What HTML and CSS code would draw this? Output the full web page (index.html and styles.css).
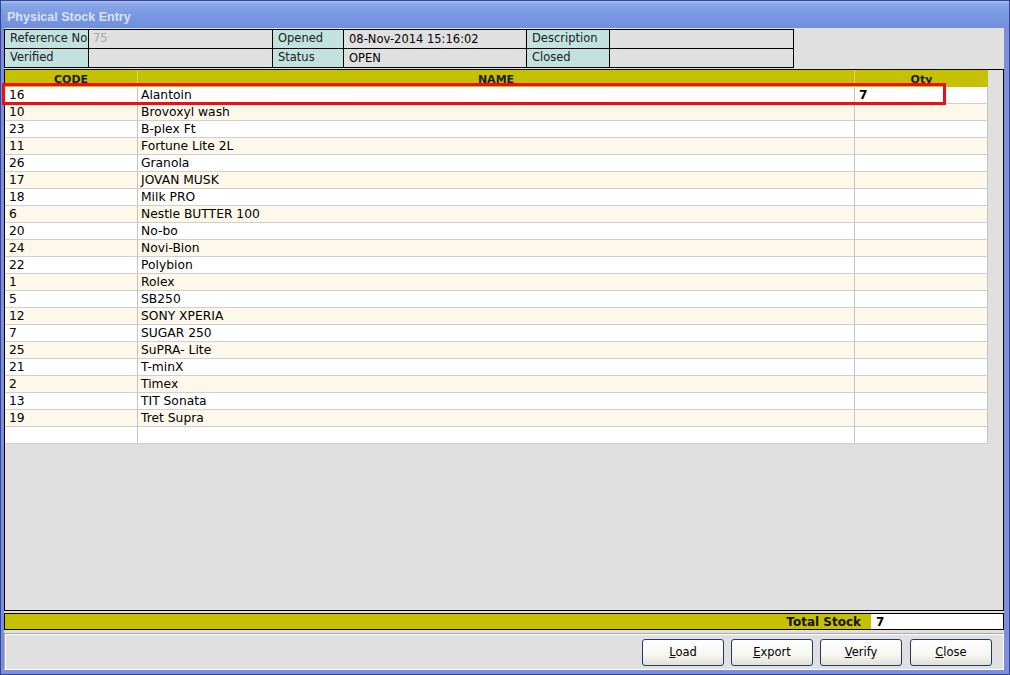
FILE: index.html
```html
<!DOCTYPE html>
<html>
<head>
<meta charset="utf-8">
<title>Physical Stock Entry</title>
<link rel="stylesheet" href="styles.css">
</head>
<body>
<div class="window">
  <div class="titlebar"><span class="title">Physical Stock Entry</span></div>
  <div class="client">
    <div class="info">
      <div class="cell label">Reference No</div>
      <div class="cell value muted">75</div>
      <div class="cell label">Opened</div>
      <div class="cell value wide">08-Nov-2014 15:16:02</div>
      <div class="cell label">Description</div>
      <div class="cell value"></div>
      <div class="cell label">Verified</div>
      <div class="cell value"></div>
      <div class="cell label">Status</div>
      <div class="cell value wide">OPEN</div>
      <div class="cell label">Closed</div>
      <div class="cell value"></div>
    </div>

    <div class="grid">
      <div class="thead">
        <div class="th">CODE</div>
        <div class="th">NAME</div>
        <div class="th last">Qty</div>
      </div>
      <div class="row"><div class="td">16</div><div class="td">Alantoin</div><div class="td qty">7</div></div>
      <div class="row"><div class="td">10</div><div class="td">Brovoxyl wash</div><div class="td qty"></div></div>
      <div class="row"><div class="td">23</div><div class="td">B-plex Ft</div><div class="td qty"></div></div>
      <div class="row"><div class="td">11</div><div class="td">Fortune Lite 2L</div><div class="td qty"></div></div>
      <div class="row"><div class="td">26</div><div class="td">Granola</div><div class="td qty"></div></div>
      <div class="row"><div class="td">17</div><div class="td">JOVAN MUSK</div><div class="td qty"></div></div>
      <div class="row"><div class="td">18</div><div class="td">Milk PRO</div><div class="td qty"></div></div>
      <div class="row"><div class="td">6</div><div class="td">Nestle BUTTER 100</div><div class="td qty"></div></div>
      <div class="row"><div class="td">20</div><div class="td">No-bo</div><div class="td qty"></div></div>
      <div class="row"><div class="td">24</div><div class="td">Novi-Bion</div><div class="td qty"></div></div>
      <div class="row"><div class="td">22</div><div class="td">Polybion</div><div class="td qty"></div></div>
      <div class="row"><div class="td">1</div><div class="td">Rolex</div><div class="td qty"></div></div>
      <div class="row"><div class="td">5</div><div class="td">SB250</div><div class="td qty"></div></div>
      <div class="row"><div class="td">12</div><div class="td">SONY XPERIA</div><div class="td qty"></div></div>
      <div class="row"><div class="td">7</div><div class="td">SUGAR 250</div><div class="td qty"></div></div>
      <div class="row"><div class="td">25</div><div class="td">SuPRA- Lite</div><div class="td qty"></div></div>
      <div class="row"><div class="td">21</div><div class="td">T-minX</div><div class="td qty"></div></div>
      <div class="row"><div class="td">2</div><div class="td">Timex</div><div class="td qty"></div></div>
      <div class="row"><div class="td">13</div><div class="td">TIT Sonata</div><div class="td qty"></div></div>
      <div class="row"><div class="td">19</div><div class="td">Tret Supra</div><div class="td qty"></div></div>
      <div class="row"><div class="td"></div><div class="td"></div><div class="td qty"></div></div>
      <div class="highlight"></div>
    </div>

    <div class="total">
      <span class="total-label">Total Stock</span>
      <span class="total-value">7</span>
    </div>

    <div class="buttons">
      <button class="btn"><u>L</u>oad</button>
      <button class="btn"><u>E</u>xport</button>
      <button class="btn"><u>V</u>erify</button>
      <button class="btn btn-last"><u>C</u>lose</button>
    </div>
  </div>
</div>
</body>
</html>
```

FILE: styles.css
```css
html, body {
  margin: 0;
  padding: 0;
  background: #ffffff;
}

.window {
  width: 1010px;
  height: 675px;
  box-sizing: border-box;
  border: 1px solid #34449a;
  background: #7c8fd8;
  display: flex;
  flex-direction: column;
  font-family: "DejaVu Sans", Verdana, sans-serif;
  color: #000;
}

.titlebar {
  flex: none;
  height: 27px;
  box-sizing: border-box;
  padding: 4px 0 0 6px;
  display: flex;
  align-items: center;
  background: linear-gradient(#a8bff1 0, #8aa7e8 3px, #7b99e2 50%, #6f8fdc 100%);
}

.title {
  font: bold 12.5px "Liberation Sans", Arial, sans-serif;
  color: #d9e3f6;
}

.client {
  flex: none;
  height: 642px;
  margin: 0 5px 4px 3px;
  background: #e0e0e0;
  display: flex;
  flex-direction: column;
}

/* header info table */
.info {
  margin-top: 1px;
  width: 790px;
  box-sizing: border-box;
  display: grid;
  grid-template-columns: 84px 184px 71px 183px 83px 184px;
  grid-auto-rows: 19px;
  border-top: 1px solid #000;
  border-left: 1px solid #000;
  font-size: 11.5px;
}

.cell {
  box-sizing: border-box;
  border-right: 1px solid #000;
  border-bottom: 1px solid #000;
  line-height: 17px;
  white-space: nowrap;
  overflow: hidden;
}

.label {
  background: #c2e2e0;
  padding-left: 5px;
  color: #202020;
}

.value {
  background: #e0e0e0;
  padding-left: 4px;
}

.value.wide {
  padding-left: 5px;
  padding-top: 1px;
}

.muted {
  color: #a8a8a8;
}

/* grid */
.grid {
  position: relative;
  margin-top: 1px;
  height: 542px;
  box-sizing: border-box;
  border: 1px solid #000;
  background: #e0e0e0;
}

.thead,
.row {
  display: grid;
  grid-template-columns: 133px 717px 133px;
  width: 983px;
}

.thead {
  height: 17px;
  background: #c5c100;
}

.th {
  box-sizing: border-box;
  border-right: 1px solid #d6d37a;
  text-align: center;
  font-weight: bold;
  font-size: 11px;
  line-height: 20px;
  height: 17px;
  overflow: hidden;
  color: #1c1c1c;
}

.th.last {
  border-right: none;
}

.row {
  height: 17px;
  background: #ffffff;
}

.row:nth-of-type(odd) {
  background: #fdf8ea;
}

.td {
  box-sizing: border-box;
  height: 17px;
  border-right: 1px solid #c4c4c4;
  border-bottom: 1px solid #cfcfcf;
  font-size: 12.3px;
  line-height: 15px;
  padding: 1px 0 0 4px;
  white-space: nowrap;
  overflow: hidden;
}

.td + .td {
  padding-left: 3px;
}

.td.qty {
  padding-left: 4px;
  font-weight: bold;
}

.highlight {
  position: absolute;
  left: -3px;
  top: 13px;
  width: 944px;
  height: 22px;
  box-sizing: border-box;
  border: 3px solid #ee0f14;
  pointer-events: none;
}

/* totals */
.total {
  margin-top: 2px;
  height: 17px;
  box-sizing: border-box;
  border: 1px solid #000;
  background: #c5c100;
  display: flex;
  justify-content: flex-end;
  align-items: stretch;
}

.total-label {
  font-weight: bold;
  font-size: 12px;
  line-height: 17px;
  padding-right: 10px;
  color: #111;
}

.total-value {
  width: 132px;
  box-sizing: border-box;
  background: #ffffff;
  padding-left: 5px;
  font-weight: bold;
  font-size: 12px;
  line-height: 17px;
}

/* buttons */
.buttons {
  margin-top: 3px;
  height: 37px;
  box-sizing: border-box;
  border-top: 1px solid #aca899;
  border-left: 1px solid #aca899;
  border-right: 1px solid #ffffff;
  border-bottom: 1px solid #ffffff;
  box-shadow: inset 1px 1px 0 #ffffff;
  display: flex;
  justify-content: flex-end;
  align-items: flex-start;
  padding: 5px 11px 0 0;
  gap: 7px;
}

.btn {
  width: 82px;
  height: 27px;
  box-sizing: border-box;
  border: 1px solid #1f3b66;
  border-radius: 3px;
  background: linear-gradient(#ffffff 0%, #f6f6f2 60%, #e2dfd6 100%);
  font-family: "DejaVu Sans", Verdana, sans-serif;
  font-size: 11.5px;
  line-height: 25px;
  color: #000;
  padding: 0;
  margin: 0;
}

.btn-last {
  margin-left: 1px;
}
```
